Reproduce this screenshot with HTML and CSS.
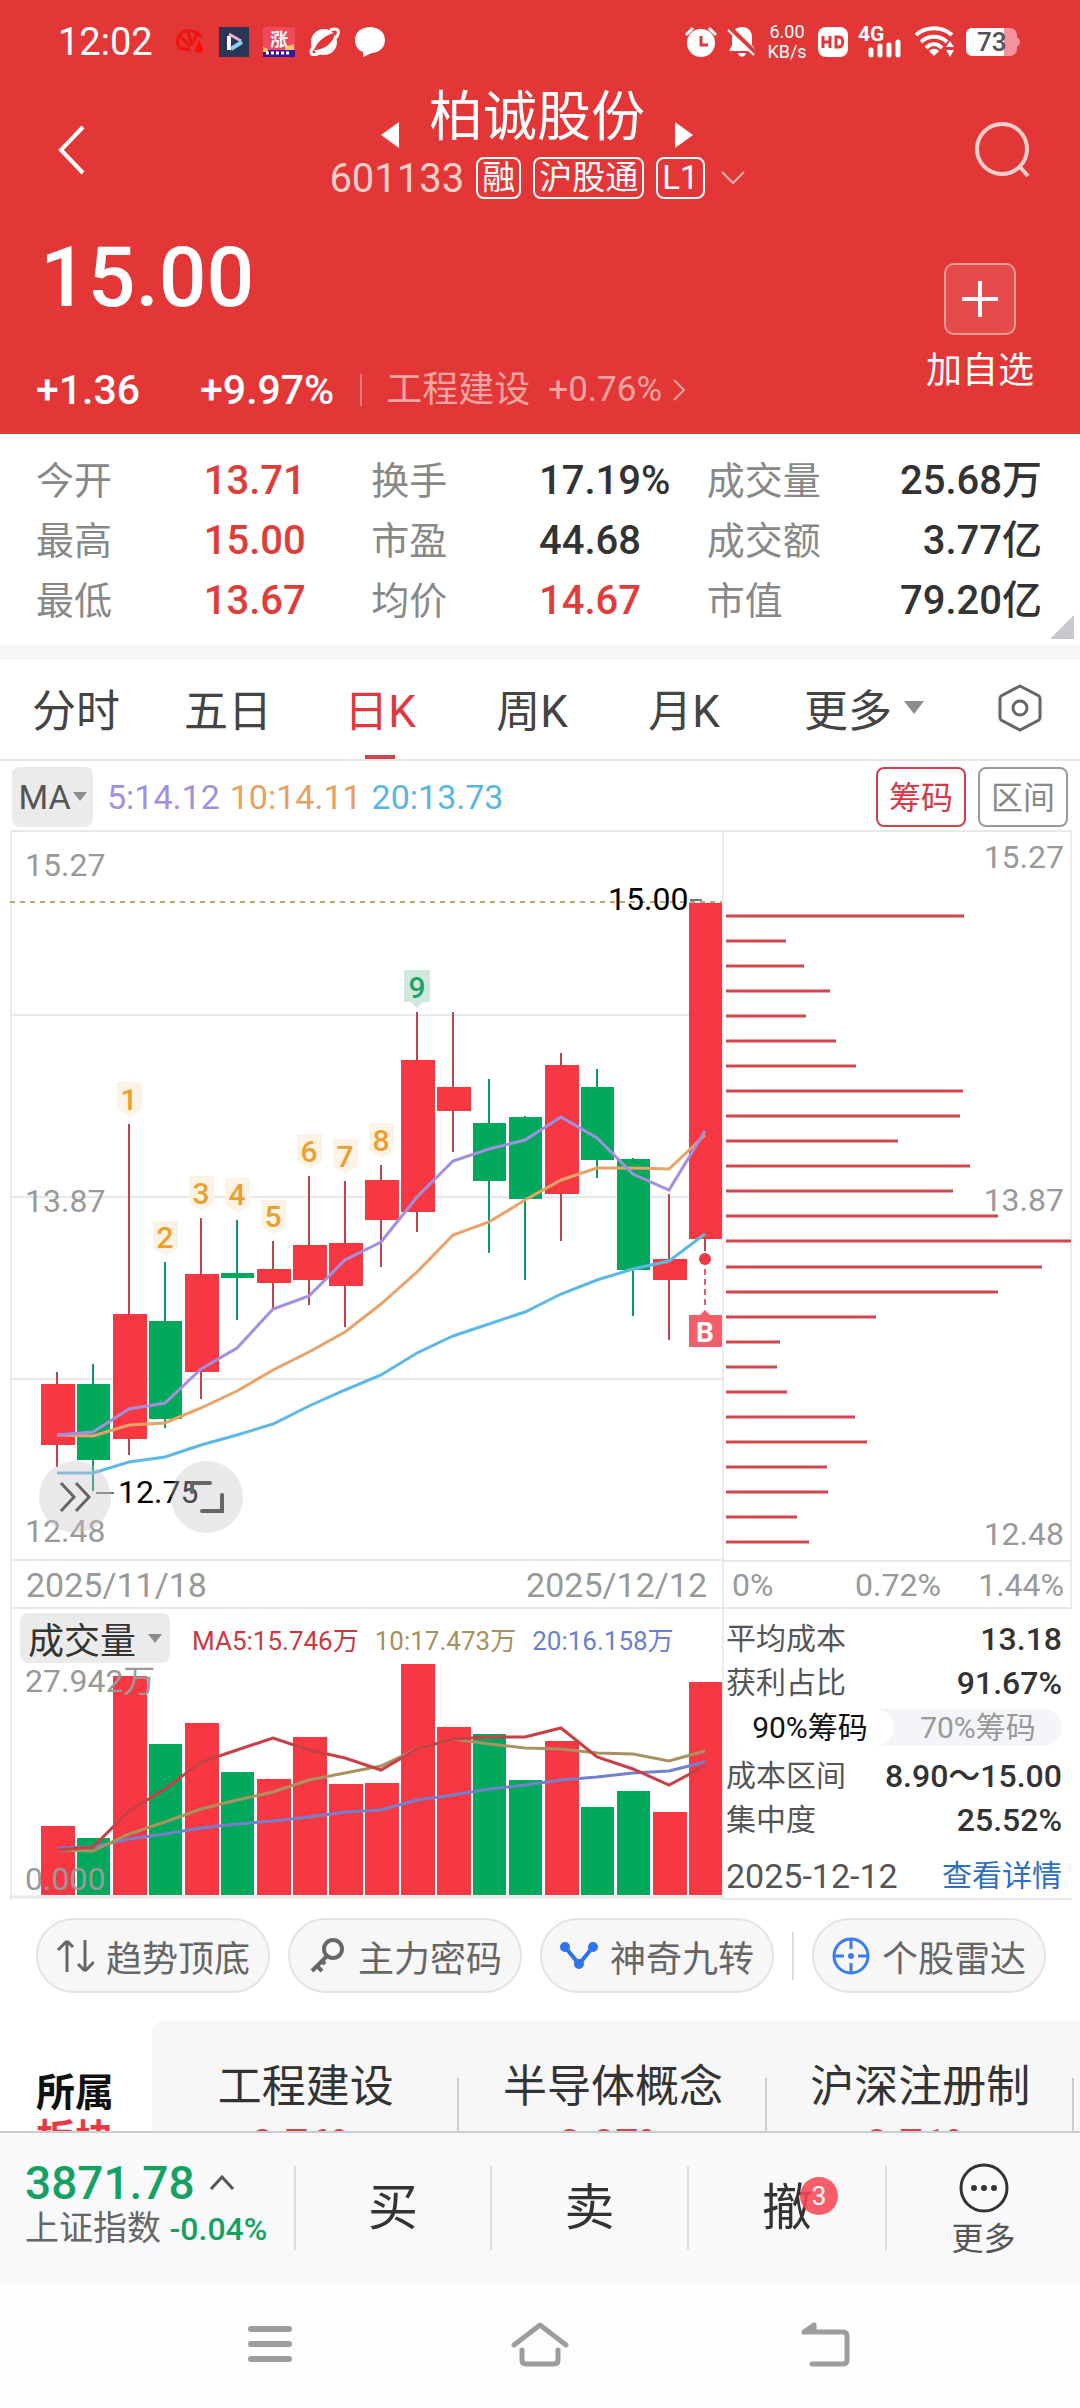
FILE: index.html
```html
<!DOCTYPE html>
<html lang="zh-CN">
<head>
<meta charset="utf-8">
<meta name="viewport" content="width=device-width, initial-scale=1">
<title>柏诚股份 601133</title>
<link rel="stylesheet" href="styles.css">
</head>
<body>
<div class="app">
  <header class="hero">
    <div class="status">
      <div class="status-side">
        <span class="clock">12:02</span>
        <svg class="st-shell" width="30" height="30" viewBox="0 0 30 30" fill="none" stroke="#f21212" stroke-width="3"><path d="M4 22C-1 9 8 3 15 4c6 0 10 3 11 6M6 10l9 10M13 5l4 13M22 7l-5 10M5 21l10 2"/><path d="M24 13l4 9a4 4 0 1 1-8 0z" fill="#ff0d0d" stroke="none"/></svg>
        <svg width="30" height="30" viewBox="0 0 30 30"><path fill="#2b3556" d="M0 0h30v30H0z"/><path d="M10 9v14" stroke="#fff" stroke-width="4"/><path d="M10 7l12 7" stroke="#f0a9cf" stroke-width="3"/><path d="M12 22l11-7" stroke="#8ccdf5" stroke-width="4"/></svg>
        <svg width="32" height="30" viewBox="0 0 32 30"><path fill="#ee4a5c" d="M0 0h32v23H0z"/><path fill="#3a17a0" d="M0 23h32v7H0z"/><path fill="#f5c65d" d="M22 20l9-3v6h-9zM0 20l5 2v3H0z"/><text x="16" y="19" class="app-glyph" text-anchor="middle">涨</text><path d="M3 26h25" stroke="#fff" stroke-width="3" stroke-dasharray="3 2"/></svg>
        <svg width="32" height="30" viewBox="0 0 32 30"><circle cx="15" cy="15" r="13" fill="#fff"/><path d="M5 23C9 13 18 7 26 6c-1 9-10 17-21 17z" fill="#e23637"/><path d="M4 20c-5 8 0 9 7 6M21 3c8-3 11 1 6 8" fill="none" stroke="#fff" stroke-width="3"/></svg>
        <svg width="30" height="30" viewBox="0 0 30 30"><path fill="#fff" d="M15 0c8 0 15 5 15 13S23 26 17 26l-9 4v-5C3 23 0 19 0 13 0 5 7 0 15 0z"/></svg>
      </div>
      <div class="status-side status-right">
        <svg width="34" height="32" viewBox="0 0 34 32"><circle cx="17" cy="17" r="14" fill="#fff"/><path d="M17 10v9h7" fill="none" stroke="#e23637" stroke-width="3"/><path d="M2 9l7-7M32 9l-7-7" stroke="#fff" stroke-width="3"/></svg>
        <svg width="28" height="32" viewBox="0 0 28 32"><path fill="#fff" d="M14 1c6 0 10 4 10 10v8l4 6H1l3-6v-8C4 5 8 1 14 1zM10 27h8c-1 5-7 5-8 0z"/><path d="M1 1l27 27" stroke="#e23637" stroke-width="5"/><path d="M0 4l26 25" stroke="#fff" stroke-width="2"/></svg>
        <span class="net-speed"><span>6.00</span><span>KB/s</span></span>
        <svg width="30" height="30" viewBox="0 0 30 30"><rect width="30" height="30" rx="8" fill="#fff"/><path d="M5 9v12M12 9v12M5 15h7M18 10h3c5 0 5 10 0 10h-3z" fill="none" stroke="#e23637" stroke-width="3"/></svg>
        <svg width="46" height="32" viewBox="0 0 46 32"><text x="0" y="15" class="sig-text">4G</text><path d="M13 29v-5M22 29v-9M31 29V19M40 29V16" stroke="#fff" stroke-width="5" stroke-linecap="round"/></svg>
        <svg width="42" height="32" viewBox="0 0 42 32"><g fill="none" stroke="#fff" stroke-width="4"><path d="M2 9c10-9 26-9 36 0M7 16c7-7 19-7 26 0M12 22c5-5 11-5 16 0"/></g><path fill="#fff" d="M20 30l-5-5c3-3 7-3 10 0zM36 15l4 6h-8zM36 31l4-7h-8z"/></svg>
        <svg width="54" height="28" viewBox="0 0 54 28"><rect width="51" height="28" rx="7" fill="#f3949c"/><path fill="#f3949c" d="M50 9q4 1 4 5t-4 5z"/><path fill="#fff" d="M7 0h31v28H7q-7 0-7-7V7q0-7 7-7z"/><text x="11" y="23" class="batt">73</text></svg>
      </div>
    </div>

    <div class="titlebar">
      <button class="icon-btn back" aria-label="返回"><svg width="30" height="52" viewBox="0 0 30 52" fill="none" stroke="#fff" stroke-width="4"><path d="M27 3L5 26l22 23"/></svg></button>
      <div class="title">
        <div class="name-row">
          <button class="icon-btn" aria-label="上一只"><svg width="18" height="26" viewBox="0 0 18 26"><path fill="#fff" d="M18 0v26L0 13z"/></svg></button>
          <h1>柏诚股份</h1>
          <button class="icon-btn" aria-label="下一只"><svg width="18" height="26" viewBox="0 0 18 26"><path fill="#fff" d="M0 0v26l18-13z"/></svg></button>
        </div>
        <div class="code-row">
          <span class="code">601133</span>
          <span class="tag">融</span><span class="tag">沪股通</span><span class="tag">L1</span>
          <svg class="chev" width="24" height="14" viewBox="0 0 24 14" fill="none" stroke="#f6b3b0" stroke-width="2"><path d="M1 1l11 11L23 1"/></svg>
        </div>
      </div>
      <button class="icon-btn search" aria-label="搜索"><svg width="56" height="58" viewBox="0 0 56 58" fill="none" stroke="#f8cfcd" stroke-width="4"><circle cx="28" cy="28" r="25"/><path d="M46 46l8 9"/></svg></button>
    </div>

    <div class="quote">
      <div>
        <div class="price">15.00</div>
        <div class="change">
          <span class="chg-abs">+1.36</span><span class="chg-pct">+9.97%</span>
          <a href="#sector" class="sector-link"><span>工程建设</span><span class="sector-pct">+0.76%</span><svg width="14" height="24" viewBox="0 0 14 24" fill="none" stroke="#f6a5a3" stroke-width="2"><path d="M2 2l10 10L2 22"/></svg></a>
        </div>
      </div>
      <button class="add-fav"><span class="plus"><svg width="36" height="36" viewBox="0 0 36 36" stroke="#fff" stroke-width="4"><path d="M18 0v36M0 18h36"/></svg></span>加自选</button>
    </div>
  </header>

  <section class="stats">
    <dl>
      <div><dt>今开</dt><dd class="up">13.71</dd></div><div><dt>换手</dt><dd>17.19%</dd></div><div class="wide"><dt>成交量</dt><dd>25.68万</dd></div>
      <div><dt>最高</dt><dd class="up">15.00</dd></div><div><dt>市盈</dt><dd>44.68</dd></div><div class="wide"><dt>成交额</dt><dd>3.77亿</dd></div>
      <div><dt>最低</dt><dd class="up">13.67</dd></div><div><dt>均价</dt><dd class="up">14.67</dd></div><div class="wide"><dt>市值</dt><dd>79.20亿</dd></div>
    </dl>
    <span class="corner"></span>
  </section>

  <nav class="tabs">
    <button>分时</button><button>五日</button><button class="active">日K</button><button>周K</button><button>月K</button>
    <button>更多<i class="caret big"></i></button>
    <button aria-label="设置"><svg width="46" height="48" viewBox="0 0 46 48" fill="none" stroke="#666" stroke-width="3"><path d="M23 2l19 10q1 1 1 3v18q0 2-1 3L23 46 4 36q-1-1-1-3V15q0-2 1-3z"/><circle cx="23" cy="24" r="7"/></svg></button>
  </nav>

  <div class="ma-row">
    <button class="chip ma-chip">MA<i class="caret"></i></button>
    <span class="ma5">5:14.12</span><span class="ma10">10:14.11</span><span class="ma20">20:13.73</span>
    <span class="box-btns"><button class="box-btn on">筹码</button><button class="box-btn">区间</button></span>
  </div>

  <section class="charts">
    <div class="col-main">
      <div class="kline">
        <svg viewBox="10 832 714 777">
          <path class="grid" d="M10 1015H724M10 1197H724M10 1379H724M10 1560H724M10 1608H724"/>
          <path d="M10 902H722" stroke="#b5a878" stroke-width="2" stroke-dasharray="5 5"/>
          <g class="axis"><text x="25" y="876">15.27</text><text x="25" y="1212">13.87</text><text x="25" y="1542">12.48</text></g>
          <path class="wick-up" d="M57 1372V1467M129 1124V1455M201 1218V1399M273 1241V1308M309 1176V1305M345 1181V1327M381 1165V1267M417 1012V1232M453 1012V1152M561 1053V1241M669 1194V1340M705 1239V1251"/>
          <path class="wick-down" d="M93 1364V1491M165 1262V1428M237 1220V1320M489 1079V1253M525 1116V1280M597 1069V1178M633 1158V1316"/>
          <path class="up-body" d="M41 1384h34v61h-34zM113 1314h34v125h-34zM185 1274h34v98h-34zM257 1269h34v14h-34zM293 1245h34v35h-34zM329 1243h34v43h-34zM365 1180h34v40h-34zM401 1060h34v152h-34zM437 1087h34v24h-34zM545 1065h34v129h-34zM653 1259h34v21h-34zM689 903h33v336h-33z"/>
          <path class="down-body" d="M77 1384h33v76h-33zM149 1321h33v98h-33zM221 1273h33v5h-33zM473 1123h33v58h-33zM509 1117h33v82h-33zM581 1087h33v73h-33zM617 1159h33v111h-33z"/>
          <g fill="none" stroke-width="3">
            <path stroke="#e9a268" d="M57 1435L93 1436 129 1425 165 1423 201 1408 237 1391 273 1370 309 1352 345 1332 381 1304 417 1272 453 1235 489 1222 525 1200 561 1180 597 1168 633 1168 669 1169 705 1135"/>
            <path stroke="#a28fdf" d="M57 1435L93 1432 129 1409 165 1403 201 1369 237 1348 273 1309 309 1296 345 1260 381 1242 417 1197 453 1161 489 1149 525 1140 561 1117 597 1138 633 1174 669 1190 705 1131"/>
            <path stroke="#5eb8e6" d="M57 1473L93 1473 129 1462 165 1457 201 1445 237 1435 273 1424 309 1406 345 1390 381 1375 417 1353 453 1336 489 1324 525 1312 561 1294 597 1280 633 1269 669 1261 705 1234"/>
          </g>
          <g fill="#fdf3e4"><path d="M117 1082h25v27l-12 8-13-8zM153 1221h25v27l-12 8-13-8zM189 1176h25v27l-12 8-13-8zM225 1178h25v27l-12 8-13-8zM261 1200h25v27l-12 8-13-8zM297 1134h25v27l-12 8-13-8zM333 1139h25v27l-12 8-13-8zM369 1123h25v27l-12 8-13-8z"/></g>
          <path fill="#cfeadd" d="M404 970h26v32h-7l-6 6-6-6h-7z"/>
          <g class="nine" fill="#eaa02f"><text x="129" y="1110">1</text><text x="165" y="1248">2</text><text x="201" y="1204">3</text><text x="237" y="1205">4</text><text x="273" y="1227">5</text><text x="309" y="1162">6</text><text x="345" y="1167">7</text><text x="381" y="1151">8</text><text x="417" y="998" fill="#1ea36a">9</text></g>
          <path d="M690 900h12M96 1493h18" stroke="#777" stroke-width="2"/>
          <g class="mark"><text x="608" y="910">15.00</text><text x="118" y="1503">12.75</text></g>
          <circle cx="705" cy="1259" r="6" fill="#ee3a45"/>
          <path d="M705 1269V1308" stroke="#d9606c" stroke-width="2" stroke-dasharray="6 4"/>
          <path fill="#f1606a" d="M689 1315h11l5-5 5 5h12v32h-33z"/>
          <text x="705" y="1342" class="b-mark">B</text>
          <g class="axis dates"><text x="26" y="1597">2025/11/18</text><text x="707" y="1597" text-anchor="end">2025/12/12</text></g>
        </svg>
        <button class="float f1" aria-label="展开"><svg width="36" height="32" viewBox="0 0 36 32" fill="none" stroke="#666" stroke-width="3"><path d="M4 2l13 14L4 30M19 2l13 14-13 14"/></svg></button>
        <button class="float f2" aria-label="全屏"><svg width="36" height="34" viewBox="0 0 36 34" fill="none" stroke="#666" stroke-width="4" stroke-linecap="round"><path d="M3 12V3h18M33 15v16H13"/></svg></button>
      </div>
      <div class="vol-head">
        <button class="chip vol-chip">成交量<i class="caret"></i></button>
        <span class="v5">MA5:15.746万</span><span class="v10">10:17.473万</span><span class="v20">20:16.158万</span>
      </div>
      <svg viewBox="10 1662 714 236">
        <path class="up-body" d="M41 1825h34v69h-34zM113 1675h34v219h-34zM185 1722h34v172h-34zM257 1778h34v116h-34zM293 1736h34v158h-34zM329 1783h34v111h-34zM365 1782h34v112h-34zM401 1663h34v231h-34zM437 1726h34v168h-34zM545 1740h34v154h-34zM653 1811h34v83h-34zM689 1681h33v213h-33z"/>
        <path class="down-body" d="M77 1837h33v57h-33zM149 1743h33v151h-33zM221 1771h33v123h-33zM473 1733h33v161h-33zM509 1779h33v115h-33zM581 1806h33v88h-33zM617 1790h33v104h-33z"/>
        <g fill="none" stroke-width="3">
          <path stroke="#7380cd" d="M57 1847L93 1846 129 1838 165 1833 201 1827 237 1823 273 1820 309 1816 345 1811 381 1809 417 1799 453 1794 489 1788 525 1784 561 1779 597 1776 633 1772 669 1770 705 1761"/>
          <path stroke="#a9925f" d="M57 1849L93 1850 129 1833 165 1821 201 1808 237 1799 273 1791 309 1779 345 1772 381 1765 417 1748 453 1738 489 1743 525 1747 561 1748 597 1752 633 1753 669 1760 705 1750"/>
          <path stroke="#c93f46" d="M57 1849L93 1846 129 1810 165 1788 201 1761 237 1749 273 1737 309 1749 345 1757 381 1769 417 1748 453 1738 489 1736 525 1736 561 1727 597 1756 633 1768 669 1784 705 1765"/>
        </g>
        <path d="M10 1896H724" stroke="#e8e8e8" stroke-width="3"/>
        <g class="axis"><text x="25" y="1691">27.942万</text><text x="25" y="1889">0.000</text></g>
      </svg>
    </div>

    <div class="col-side">
      <svg viewBox="724 832 348 777">
        <g class="axis"><text x="1064" y="868" text-anchor="end">15.27</text><text x="1064" y="1211" text-anchor="end">13.87</text><text x="1064" y="1545" text-anchor="end">12.48</text><text x="732" y="1596">0%</text><text x="855" y="1596">0.72%</text><text x="1064" y="1596" text-anchor="end">1.44%</text></g>
        <path class="grid" d="M724 1561H1072M724 1608H1072"/>
        <path stroke="#d2474f" stroke-width="3" d="M726 916h238M726 941h60M726 966h78M726 991h104M726 1016h80M726 1041h110M726 1066h130M726 1091h237M726 1116h234M726 1141h172M726 1166h244M726 1191h227M726 1216h272M726 1241h345M726 1267h316M726 1292h272M726 1317h150M726 1342h54M726 1367h51M726 1392h61M726 1417h129M726 1442h141M726 1467h101M726 1492h102M726 1517h71M726 1542h83"/>
      </svg>
      <div class="cost">
        <p><span>平均成本</span><b>13.18</b></p>
        <p><span>获利占比</span><b>91.67%</b></p>
        <div class="seg"><button class="sel">90%筹码</button><button>70%筹码</button></div>
        <p><span>成本区间</span><b>8.90～15.00</b></p>
        <p><span>集中度</span><b>25.52%</b></p>
        <p class="foot"><time>2025-12-12</time><a href="#detail">查看详情</a></p>
      </div>
    </div>
  </section>

  <div class="pills">
    <button><svg width="38" height="36" viewBox="0 0 38 36" fill="none" stroke="#666" stroke-width="3"><path d="M11 34V3M2 12l9-9M29 2v31M38 24l-9 9M11 3l6 6M29 33l-7-7"/></svg>趋势顶底</button>
    <button><svg width="38" height="38" viewBox="0 0 38 38" fill="none" stroke="#666" stroke-width="4"><circle cx="25" cy="12" r="9"/><path d="M19 19L4 34M8 28l6 6M13 23l4 4"/></svg>主力密码</button>
    <button><svg width="38" height="28" viewBox="0 0 38 28" stroke="#2f73ec" stroke-width="4" fill="#2f73ec"><path d="M5 5l14 17L33 5" fill="none"/><circle cx="5" cy="5" r="3"/><circle cx="33" cy="5" r="3"/><circle cx="19" cy="22" r="3"/></svg>神奇九转</button>
    <span class="vr"></span>
    <button><svg width="38" height="38" viewBox="0 0 38 38" fill="none" stroke="#3b7df0" stroke-width="3"><circle cx="19" cy="19" r="17"/><path d="M19 2v10M19 26v10M2 19h10M26 19h10"/><circle cx="19" cy="19" r="3" fill="#3b7df0" stroke="none"/></svg>个股雷达</button>
  </div>

  <section class="sectors" id="sector">
    <div class="belong">所属<em>板块</em></div>
    <ul>
      <li>工程建设<b>0.76%</b></li>
      <li>半导体概念<b>0.97%</b></li>
      <li>沪深注册制<b>0.71%</b></li>
    </ul>
  </section>

  <footer class="actions">
    <a href="#index" class="index">
      <span class="idx-num">3871.78<svg width="26" height="16" viewBox="0 0 26 16" fill="none" stroke="#555" stroke-width="3"><path d="M2 14L13 2l11 12"/></svg></span>
      <span class="idx-sub">上证指数 <b>-0.04%</b></span>
    </a>
    <button>买</button>
    <button>卖</button>
    <button><span class="badge-wrap">撤<span class="badge">3</span></span></button>
    <button class="more"><svg width="50" height="50" viewBox="0 0 50 50" fill="none" stroke="#333" stroke-width="3"><circle cx="25" cy="25" r="23"/><g fill="#333" stroke="none"><circle cx="15" cy="25" r="3"/><circle cx="25" cy="25" r="3"/><circle cx="35" cy="25" r="3"/></g></svg>更多</button>
  </footer>

  <nav class="sysnav">
    <button aria-label="最近任务"><svg width="46" height="44" viewBox="0 0 46 44" stroke="#9d9d9d" stroke-width="6" stroke-linecap="round"><path d="M4 7h38M4 22h38M4 37h38"/></svg></button>
    <button aria-label="主页"><svg width="58" height="46" viewBox="0 0 58 46" fill="none" stroke="#9d9d9d" stroke-width="5" stroke-linecap="round" stroke-linejoin="round"><path d="M3 24L29 4l26 20M11 29v10q0 4 4 4h28q4 0 4-4V29"/></svg></button>
    <button aria-label="返回"><svg width="50" height="46" viewBox="0 0 50 46" fill="none" stroke="#9d9d9d" stroke-width="5" stroke-linecap="round" stroke-linejoin="round"><path d="M4 11h39q4 0 4 4v24q0 4-4 4H12M4 11l10-7v7"/></svg></button>
  </nav>
</div>
</body>
</html>
```

FILE: styles.css
```css
* { box-sizing: border-box; }
body {
  margin: 0;
  background: #fff;
  color: #333;
  font-family: Roboto, "Noto Sans CJK SC", sans-serif;
  font-size: 36px;
}
.app { min-height: 100vh; display: flex; flex-direction: column; }
button { border: 0; padding: 0; margin: 0; background: none; color: inherit; font: inherit; }
a { color: inherit; text-decoration: none; }
svg { display: block; flex: none; }
h1, p, dl, dd, ul { margin: 0; padding: 0; }
ul { list-style: none; }

/* header */
.hero { background: #e23637; color: #fff; }
.status {
  height: 84px;
  padding: 0 60px 0 58px;
  display: flex;
  align-items: center;
  justify-content: space-between;
}
.status svg { overflow: visible; }
.status-side { display: flex; align-items: center; gap: 14px; }
.clock { font-size: 38px; margin-right: 8px; }
.app-glyph { font: 700 18px "Noto Sans CJK SC", sans-serif; fill: #fff; }
.status-right { gap: 10px; }
.net-speed {
  display: flex;
  flex-direction: column;
  align-items: center;
  width: 42px;
  font-size: 18px;
  line-height: 20px;
}
.sig-text { font: 700 21px Roboto, sans-serif; fill: #fff; }
.batt { font: 500 26px Roboto, sans-serif; fill: #555; }

.titlebar {
  height: 126px;
  padding: 0 50px 0 56px;
  display: grid;
  grid-template-columns: 1fr auto 1fr;
  align-items: center;
}
.icon-btn { display: block; }
.search { justify-self: end; }
.back, .search { padding-top: 6px; }
.title { height: 126px; margin-right: 12px; }
.name-row {
  height: 64px;
  display: flex;
  justify-content: center;
  align-items: flex-end;
  gap: 30px;
}
h1 { font-size: 54px; line-height: 60px; font-weight: 400; }
.code-row {
  height: 60px;
  display: flex;
  align-items: center;
  justify-content: center;
  gap: 12px;
}
.code { font-size: 40px; color: #f9cfcb; }
.tag {
  height: 42px;
  line-height: 38px;
  padding: 0 4px;
  border: 2px solid #fff;
  border-radius: 8px;
  font-size: 33px;
}
.chev { margin-left: 4px; }

.quote {
  height: 224px;
  padding: 18px 46px 0 36px;
  display: flex;
  justify-content: space-between;
}
.price { font-size: 84px; line-height: 100px; font-weight: 500; padding-left: 4px; }
.change {
  height: 60px;
  margin-top: 32px;
  display: flex;
  align-items: center;
  font-size: 41px;
}
.chg-abs, .chg-pct { font-weight: 500; }
.chg-pct { margin-left: 60px; }
.sector-link {
  display: flex;
  align-items: center;
  gap: 18px;
  margin-left: 26px;
  padding-left: 24px;
  font-size: 36px;
  line-height: 32px;
  color: #f6a5a3;
  border-left: 2px solid #ee8380;
}
.sector-link svg { margin-left: -8px; }
.sector-pct { font-size: 35px; }
.add-fav {
  display: flex;
  flex-direction: column;
  align-items: center;
  align-self: flex-start;
  margin-top: 35px;
  line-height: 72px;
}
.plus {
  width: 72px;
  height: 72px;
  display: flex;
  align-items: center;
  justify-content: center;
  border: 2px solid #f19b99;
  border-radius: 10px;
  background: #e64b4c;
}

/* quote details */
.stats {
  position: relative;
  padding: 17px 38px 14px 36px;
  border-bottom: 15px solid #f7f7f7;
}
.stats dl { display: grid; grid-template-columns: 1fr 1fr 1fr; }
.stats dl div { display: grid; grid-template-columns: 1fr 1fr; height: 60px; line-height: 60px; }
.stats .wide { grid-template-columns: auto auto; justify-content: space-between; }
dt { font-size: 38px; color: #888; }
dd { font-size: 40px; font-weight: 500; color: #333; white-space: nowrap; }
.stats .up { color: #e03c39; }
.corner {
  position: absolute;
  right: 6px;
  bottom: 6px;
  border-left: 24px solid transparent;
  border-bottom: 24px solid #c8c8cc;
}

/* period tabs */
.tabs {
  height: 101px;
  padding-right: 8px;
  display: grid;
  grid-template-columns: 152fr 152fr 152fr 152fr 152fr 208fr 104fr;
  border-bottom: 2px solid #e6e6e6;
}
.tabs button {
  position: relative;
  padding-bottom: 4px;
  display: flex;
  align-items: center;
  justify-content: center;
  gap: 12px;
  font-size: 44px;
  color: #444;
}
.tabs .active { color: #e0383f; }
.tabs .active::after {
  content: "";
  position: absolute;
  bottom: 0;
  width: 30px;
  height: 4px;
  background: #cc4652;
}
.caret {
  border: 7px solid transparent;
  border-top: 9px solid #8c8c8c;
  border-bottom: 0;
}
.caret.big { border-width: 13px 10px 0; }

.ma-row {
  height: 71px;
  padding: 0 12px;
  display: flex;
  align-items: center;
  gap: 10px;
  font-size: 34px;
}
.chip {
  display: flex;
  align-items: center;
  justify-content: center;
  background: #ebebeb;
  border-radius: 8px;
}
.ma-chip { width: 81px; height: 60px; color: #555; gap: 2px; margin-right: 4px; }
.ma5 { color: #a28fdf; }
.ma10 { color: #e9a060; }
.ma20 { color: #58b5e4; }
.box-btns { display: flex; gap: 12px; margin-left: auto; }
.box-btn {
  width: 90px;
  height: 60px;
  padding-bottom: 4px;
  border: 2px solid #999;
  border-radius: 8px;
  font-size: 32px;
  color: #888;
}
.box-btn.on { border-color: #d2404c; color: #d93844; }

/* charts */
.charts {
  margin: 0 8px 0 10px;
  display: grid;
  grid-template-columns: 714fr 348fr;
  box-shadow: 0 -2px #e8e8e8;
}
.charts svg { width: 100%; }
.col-main { box-shadow: inset 2px 0 #ececec, inset -2px 0 #ececec; }
.col-side > svg { box-shadow: inset -2px 0 #ececec; }
.grid { stroke: #e8e8e8; stroke-width: 2; }
.axis { font-size: 32px; fill: #999; }
.dates { font-size: 34px; }
.mark { font-size: 32px; fill: #000; }
.nine { font-size: 30px; font-weight: 500; text-anchor: middle; }
.b-mark { font-size: 28px; font-weight: 700; fill: #fff; text-anchor: middle; }
.wick-up { stroke: #b9454f; stroke-width: 2; }
.wick-down { stroke: #0a9c5b; stroke-width: 2; }
.up-body { fill: #f73842; }
.down-body { fill: #02a95c; }
.kline { position: relative; }
.float {
  position: absolute;
  bottom: 76px;
  width: 72px;
  height: 72px;
  border-radius: 50%;
  background: rgba(200, 195, 200, 0.38);
  display: flex;
  align-items: center;
  justify-content: center;
}
.charts .float svg { width: 36px; }
.f1 { left: 29px; }
.f2 { left: 161px; }
.vol-head {
  height: 54px;
  padding: 4px 0 0 10px;
  display: flex;
  align-items: center;
  gap: 16px;
  font-size: 26px;
  white-space: nowrap;
}
.vol-chip { width: 150px; height: 50px; font-size: 36px; color: #333; gap: 12px; margin-right: 6px; }
.v5 { color: #c9393f; }
.v10 { color: #a8905a; }
.v20 { color: #6b7fcf; }

.cost { padding: 8px 10px 0 2px; border-bottom: 2px solid #e8e8e8; font-size: 30px; }
.cost p { display: flex; justify-content: space-between; line-height: 44px; color: #555; }
.cost b { font-size: 32px; font-weight: 500; color: #333; }
.seg {
  display: flex;
  height: 37px;
  margin: 4px 0 8px;
  border-radius: 19px;
  background: #f3f5f8;
}
.seg button { flex: 1; line-height: 37px; border-radius: 19px; color: #999; }
.seg .sel { background: #fff; color: #111; }
.cost .foot { margin-top: 12px; }
.foot time { font-size: 34px; }
.foot a { color: #2d6fc0; }

/* shortcuts */
.pills {
  padding: 18px 34px 28px 36px;
  display: flex;
  align-items: center;
  justify-content: space-between;
}
.pills button {
  width: 234px;
  height: 75px;
  display: flex;
  align-items: center;
  justify-content: center;
  gap: 12px;
  border: 2px solid #e4e4e4;
  border-radius: 38px;
  background: #f7f7f7;
  color: #666;
  white-space: nowrap;
}
.vr { width: 2px; height: 48px; background: #ddd; }

/* related sectors, cut off by the action bar */
.sectors { display: flex; height: 110px; overflow: hidden; }
.belong {
  width: 152px;
  flex: none;
  padding: 49px 0 0 36px;
  font-size: 39px;
  font-weight: 700;
  line-height: 46px;
  color: #111;
}
.belong em { display: block; color: #e83a42; font-style: normal; }
.sectors ul {
  flex: 1;
  display: grid;
  grid-template-columns: 1fr 1fr 1fr;
  padding-right: 6px;
  background: #f7f7f7;
  border-top-left-radius: 12px;
}
.sectors li {
  position: relative;
  padding-top: 36px;
  text-align: center;
  font-size: 44px;
  line-height: 60px;
  white-space: nowrap;
}
.sectors li::after {
  content: "";
  position: absolute;
  right: 0;
  top: 57px;
  bottom: 0;
  width: 2px;
  background: #ccc;
}
.sectors b { display: block; font-size: 40px; line-height: 56px; color: #d04450; }

/* action bar */
.actions {
  height: 152px;
  display: grid;
  grid-template-columns: 294fr 196fr 197fr 198fr 195fr;
  align-items: center;
  border-top: 2px solid #ccc;
  background: #f9f9fb;
}
.actions > button {
  height: 84px;
  border-left: 2px solid #ddd;
  font-size: 50px;
  line-height: 80px;
  color: #333;
}
.index { padding: 0 0 10px 25px; display: flex; flex-direction: column; white-space: nowrap; }
.idx-num {
  display: flex;
  align-items: center;
  gap: 14px;
  font-size: 46px;
  line-height: 50px;
  font-weight: 500;
  color: #14a263;
}
.idx-sub { font-size: 34px; line-height: 40px; color: #666; }
.idx-sub b { font-size: 32px; font-weight: 500; color: #14a263; }
.badge-wrap { position: relative; }
.badge {
  position: absolute;
  top: -2px;
  right: -26px;
  width: 38px;
  height: 38px;
  border-radius: 50%;
  background: rgba(246, 72, 84, 0.88);
  color: #fff;
  font-size: 26px;
  line-height: 38px;
  text-align: center;
}
.actions .more {
  padding-top: 6px;
  display: flex;
  flex-direction: column;
  align-items: center;
  justify-content: center;
  gap: 6px;
  font-size: 32px;
  line-height: 40px;
  color: #555;
}

/* system navigation */
.sysnav {
  flex: 1;
  min-height: 124px;
  padding: 0 100px 4px 130px;
  display: grid;
  grid-template-columns: 280fr 260fr 310fr;
  align-items: center;
  background: #fdfdfd;
}
.sysnav button { display: flex; justify-content: center; }
```
